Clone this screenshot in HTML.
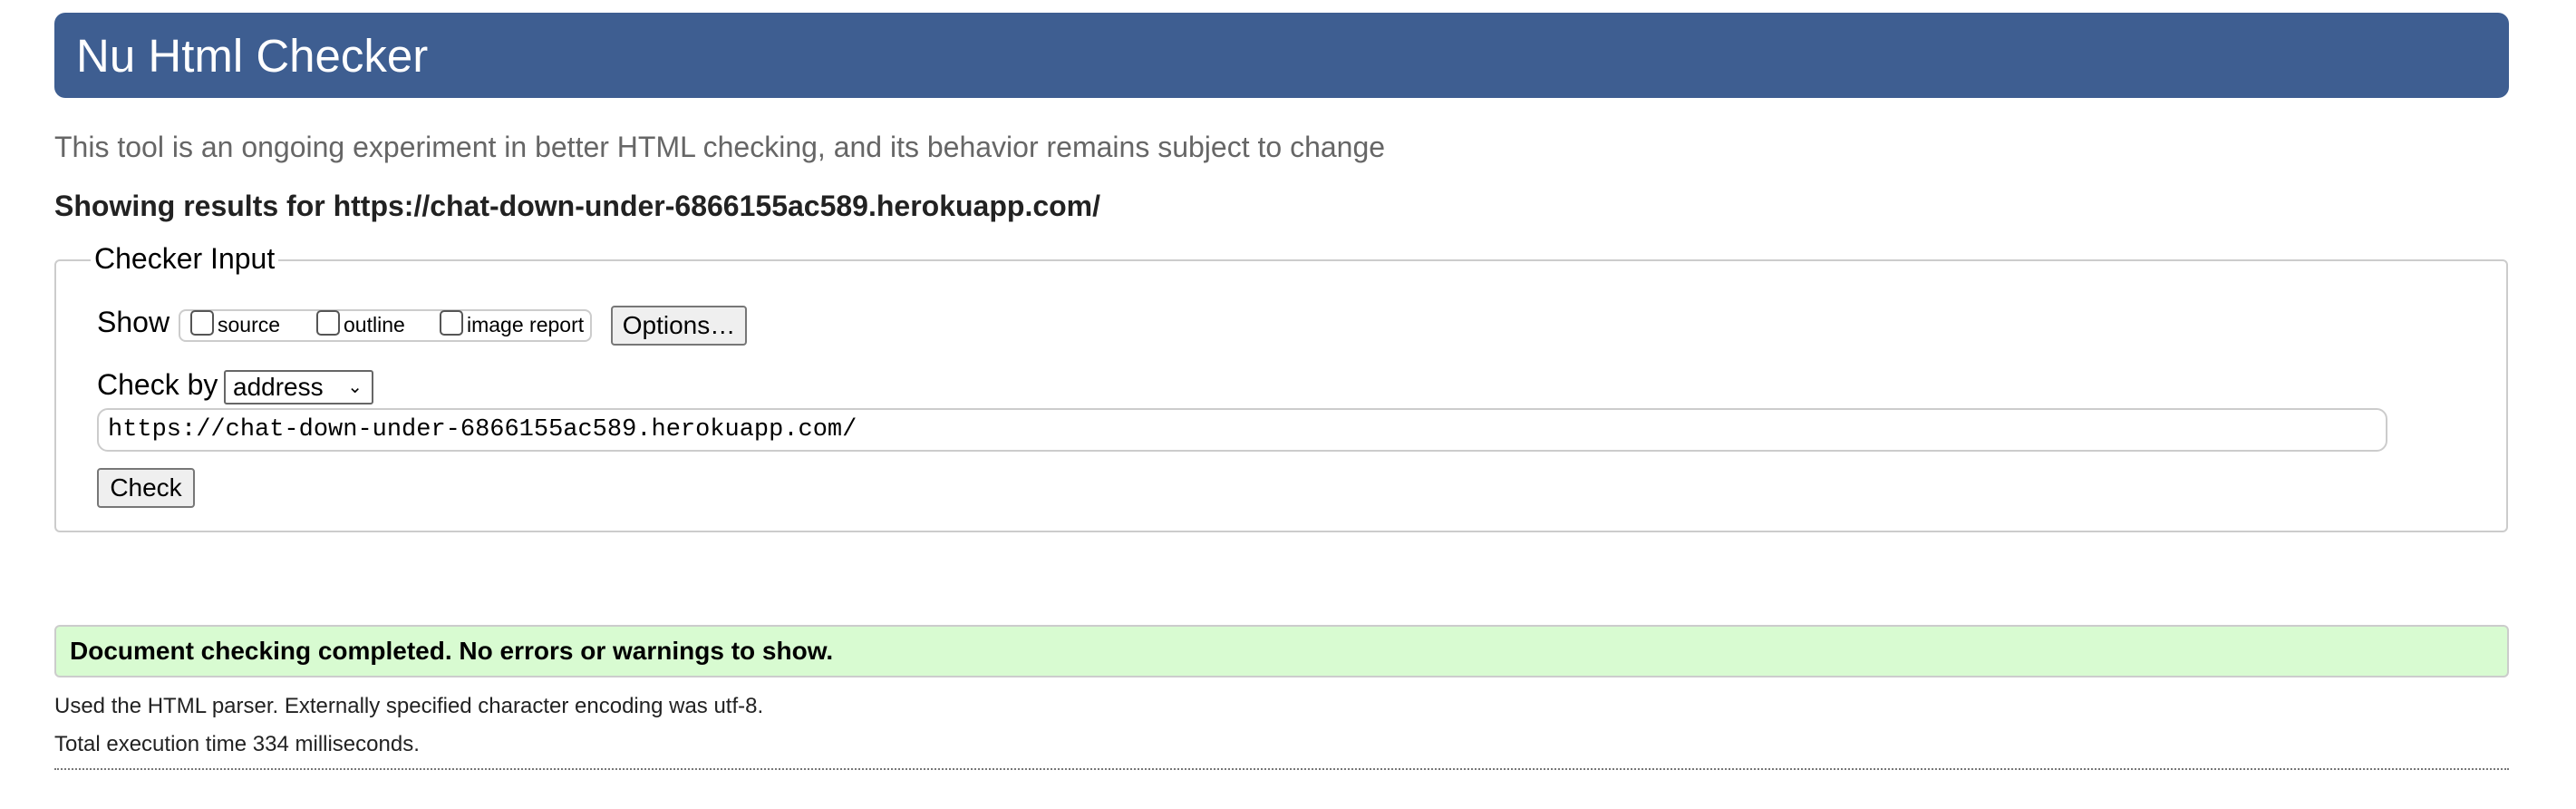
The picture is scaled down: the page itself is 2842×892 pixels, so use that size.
<!DOCTYPE html>
<html><head><meta charset="utf-8"><style>
body{margin:0;width:2842px;height:892px;background:#fff;font-family:"Liberation Sans",Arial,sans-serif;position:relative;overflow:hidden;color:#000}
.a{position:absolute;white-space:nowrap}
.hdr{left:60px;top:14px;width:2708px;height:94px;background:#3e5e91;border-radius:12px}
.hdr span{position:absolute;left:24px;top:18px;font-size:51px;color:#fff}
.fs{left:60px;top:286px;width:2703px;height:297px;border:2px solid #ccc;border-radius:6px}
.cb{display:inline-block;width:22px;height:24px;border:2px solid #555;border-radius:5px;vertical-align:-4px;margin-right:4px;background:#fff}
.btn{border:2px solid #777;border-radius:4px;background:#efefef;font-size:28px;text-align:center;box-sizing:border-box}
</style></head><body>
<div class="a hdr"><span>Nu Html Checker</span></div>
<div class="a" style="left:60px;top:144px;font-size:32px;color:#666">This tool is an ongoing experiment in better HTML checking, and its behavior remains subject to change</div>
<div class="a" style="left:60px;top:209px;font-size:32px;font-weight:bold;color:#222">Showing results for https://chat-down-under-6866155ac589.herokuapp.com/</div>
<div class="a fs"></div>
<div class="a" style="left:100px;top:267px;font-size:32px;background:#fff;padding:0 4px">Checker Input</div>
<div class="a" style="left:107px;top:337px;font-size:32px">Show</div>
<div class="a" style="left:197px;top:341px;width:456px;height:36px;border:2px solid #ccc;border-radius:8px;box-sizing:border-box"></div>
<div class="a" style="left:210px;top:342px;font-size:23px"><span class="cb"></span>source</div>
<div class="a" style="left:349px;top:342px;font-size:23px"><span class="cb"></span>outline</div>
<div class="a" style="left:485px;top:342px;font-size:23px"><span class="cb"></span>image report</div>
<div class="a btn" style="left:674px;top:337px;width:150px;height:44px;line-height:40px">Options…</div>
<div class="a" style="left:107px;top:406px;font-size:32px">Check by</div>
<div class="a" style="left:247px;top:408px;width:165px;height:38px;border:2px solid #666;border-radius:3px;box-sizing:border-box;font-size:28px;line-height:34px;padding-left:8px">address<span style="position:absolute;right:10px;top:0;font-size:20px">&#8964;</span></div>
<div class="a" style="left:107px;top:450px;width:2527px;height:48px;border:2px solid #ccc;border-radius:12px;box-sizing:border-box;font-family:'Liberation Mono',monospace;font-size:27px;line-height:44px;padding-left:10px">https://chat-down-under-6866155ac589.herokuapp.com/</div>
<div class="a btn" style="left:107px;top:516px;width:108px;height:44px;line-height:40px">Check</div>
<div class="a" style="left:60px;top:689px;width:2708px;height:58px;background:#d8fbd1;border:2px solid #ccc;border-radius:6px;box-sizing:border-box"></div>
<div class="a" style="left:77px;top:702px;font-size:28px;font-weight:bold">Document checking completed. No errors or warnings to show.</div>
<div class="a" style="left:60px;top:765px;font-size:24px;color:#222">Used the HTML parser. Externally specified character encoding was utf-8.</div>
<div class="a" style="left:60px;top:807px;font-size:24px;color:#222">Total execution time 334 milliseconds.</div>
<div class="a" style="left:60px;top:847px;width:2708px;border-top:2px dotted #777"></div>
</body></html>
